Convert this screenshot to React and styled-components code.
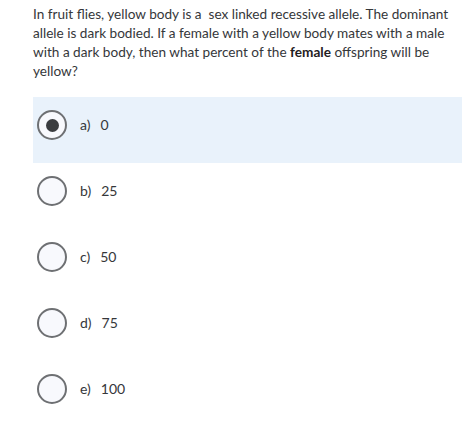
import React from "react";
import styled, { createGlobalStyle } from "styled-components";

const Global = createGlobalStyle`
  html, body { margin: 0; padding: 0; background: #ffffff; }
  body { font-family: Lato, "Noto Sans", sans-serif; color: #35373a; }
`;

const Page = styled.div`
  padding: 5px 12px 0 33px;
  width: 429px;
`;

const Question = styled.p`
  margin: 0 0 16px 0;
  font-size: 13.6px;
  line-height: 19px;
  color: #35373a;
  b { font-weight: 700; color: #1f2022; }
`;

const Options = styled.div`
  display: flex;
  flex-direction: column;
`;

const Row = styled.label`
  display: flex;
  align-items: flex-start;
  height: 66px;
  box-sizing: border-box;
  padding: 13px 0 0 4px;
  background: ${(p) => (p.$selected ? "#e9f2fb" : "transparent")};
`;

const Radio = styled.span`
  width: 30px;
  height: 30px;
  box-sizing: border-box;
  border-radius: 50%;
  border: 2px solid #6e7073;
  background: #f8f9fd;
  display: flex;
  align-items: center;
  justify-content: center;
  flex: none;
  &::after {
    content: "";
    display: ${(p) => (p.$checked ? "block" : "none")};
    width: 13px;
    height: 13px;
    border-radius: 50%;
    background: #3b3d40;
  }
`;

const Label = styled.span`
  margin-left: 13px;
  line-height: 30px;
  font-size: 14px;
  color: #35373a;
  display: flex;
  gap: 10px;
`;

const options = [
  ["a)", "0"],
  ["b)", "25"],
  ["c)", "50"],
  ["d)", "75"],
  ["e)", "100"],
];

export default function App() {
  return (
    <>
      <Global />
      <Page>
        <Question>
          In fruit flies, yellow body is a{"\u00a0"} sex linked recessive allele. The dominant
          allele is dark bodied. If a female with a yellow body mates with a male
          with a dark body, then what percent of the <b>female</b> offspring will be
          yellow?
        </Question>
        <Options>
          {options.map(([k, v], i) => (
            <Row key={k} $selected={i === 0}>
              <Radio $checked={i === 0} />
              <Label>
                <span>{k}</span>
                <span>{v}</span>
              </Label>
            </Row>
          ))}
        </Options>
      </Page>
    </>
  );
}
